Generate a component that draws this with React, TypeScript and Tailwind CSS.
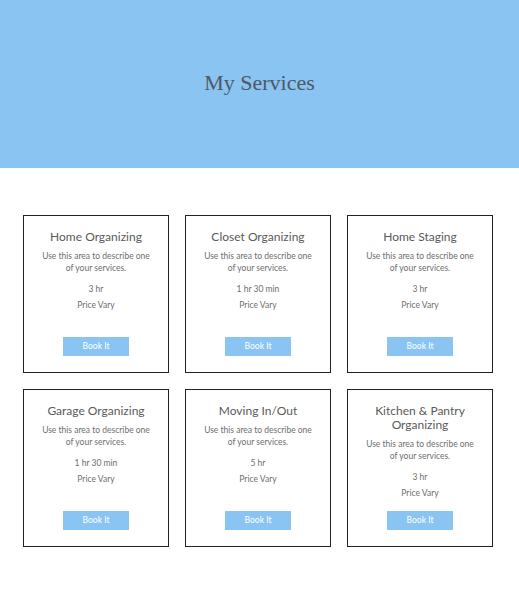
import React from 'react';

interface Service {
  title: string;
  duration: string;
}

const services: Service[] = [
  { title: 'Home Organizing', duration: '3 hr' },
  { title: 'Closet Organizing', duration: '1 hr 30 min' },
  { title: 'Home Staging', duration: '3 hr' },
  { title: 'Garage Organizing', duration: '1 hr 30 min' },
  { title: 'Moving In/Out', duration: '5 hr' },
  { title: 'Kitchen & Pantry Organizing', duration: '3 hr' },
];

const ServiceCard: React.FC<Service> = ({ title, duration }) => {
  return (
    <div className="flex h-[158px] flex-col items-center border border-[#222] px-[14px] pt-[14px] pb-[16px] text-center">
      <h3 className="max-w-[112px] text-[12px] leading-[14px] text-[#5a5a5a]">{title}</h3>
      <p className="mt-[6px] text-[8.5px] leading-[12px] text-[#6e6e6e]">
        Use this area to describe one
        <br />
        of your services.
      </p>
      <p className="mt-[9px] text-[8.5px] leading-[12px] text-[#6e6e6e]">{duration}</p>
      <p className="mt-[4px] text-[8.5px] leading-[12px] text-[#6e6e6e]">Price Vary</p>
      <button className="mt-auto h-[19px] w-[66px] shrink-0 bg-[#89c4f3] text-[8.5px] text-white">
        Book It
      </button>
    </div>
  );
};

export default function App() {
  return (
    <div className="min-h-[591px] bg-white font-['Lato','Liberation_Sans',sans-serif]">
      <header className="flex h-[168px] items-center justify-center bg-[#89c4f3] pb-[4px]">
        <h1 className="font-['Liberation_Serif',serif] text-[22px] text-[#4f5864]">
          My Services
        </h1>
      </header>
      <main className="px-[23px] pt-[47px] pb-[45px]">
        <div className="grid grid-cols-[146px_146px_146px] gap-4">
          {services.map((s) => (
            <ServiceCard key={s.title} {...s} />
          ))}
        </div>
      </main>
    </div>
  );
}
